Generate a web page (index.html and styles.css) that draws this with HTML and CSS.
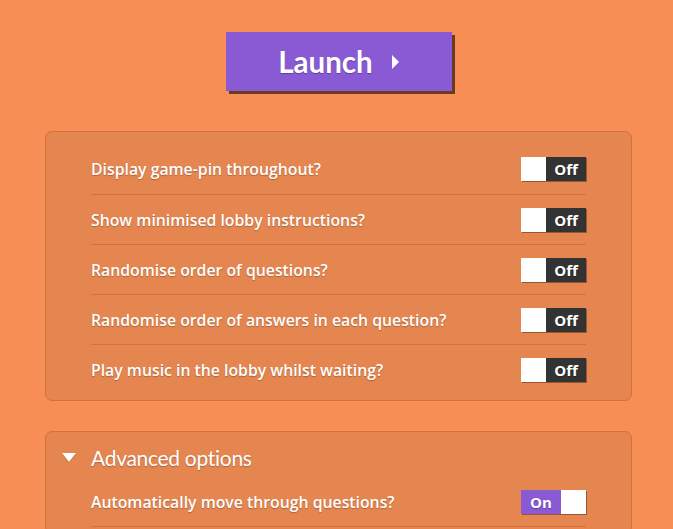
FILE: index.html
```html
<!DOCTYPE html>
<html lang="en">
<head>
<meta charset="UTF-8">
<title>Launch options</title>
<link rel="stylesheet" href="styles.css">
</head>
<body>

<div class="page">
	<div class="launch-wrap">
		<button class="launch">Launch <span class="arrow"></span></button>
	</div>

	<div class="panel">
		<div class="row">
			<span class="label">Display game-pin throughout?</span>
			<span class="toggle off"><span class="knob"></span><span class="state">Off</span></span>
		</div>
		<div class="row">
			<span class="label">Show minimised lobby instructions?</span>
			<span class="toggle off"><span class="knob"></span><span class="state">Off</span></span>
		</div>
		<div class="row">
			<span class="label">Randomise order of questions?</span>
			<span class="toggle off"><span class="knob"></span><span class="state">Off</span></span>
		</div>
		<div class="row">
			<span class="label">Randomise order of answers in each question?</span>
			<span class="toggle off"><span class="knob"></span><span class="state">Off</span></span>
		</div>
		<div class="row">
			<span class="label">Play music in the lobby whilst waiting?</span>
			<span class="toggle off"><span class="knob"></span><span class="state">Off</span></span>
		</div>
	</div>

	<div class="panel advanced">
		<div class="adv-head">
			<span class="caret"></span>
			<span class="adv-title">Advanced options</span>
		</div>
		<div class="row">
			<span class="label">Automatically move through questions?</span>
			<span class="toggle on"><span class="state">On</span><span class="knob"></span></span>
		</div>
	</div>
</div>

</body>
</html>
```

FILE: styles.css
```css
* {
	box-sizing: border-box;
	margin: 0;
	padding: 0;
}
html, body {
	background: #f78e56;
	color: #fff;
	height: 100%;
	overflow: hidden;
}
body {
	font-family: "Open Sans", Lato, sans-serif;
}
.page {
	width: 587px;
	margin-left: 45px;
	padding-top: 32px;
}
.launch-wrap {
	display: flex;
	justify-content: center;
	margin-bottom: 40px;
}
.launch {
	width: 226px;
	height: 59px;
	border: none;
	background: #8a5ad4;
	box-shadow: 3px 3px 0 #6b3a22;
	color: #fff;
	font-family: Lato, sans-serif;
	font-weight: 700;
	font-size: 29.5px;
	text-shadow: 0 1px 1px rgba(0,0,0,0.3);
	display: flex;
	align-items: center;
	justify-content: center;
	gap: 19px;
}
.arrow {
	width: 0;
	height: 0;
	border-top: 7px solid transparent;
	border-bottom: 7px solid transparent;
	border-left: 7px solid #fff;
}
.panel {
	background: #e5854f;
	border: 1px solid #d66f3c;
	border-radius: 7px;
	padding: 12px 45px 6px 45px;
}
.row {
	display: flex;
	align-items: center;
	justify-content: space-between;
	height: 50px;
	border-top: 1px solid #d66f3c;
}
.row:first-child {
	border-top: none;
}
.label {
	font-size: 15.8px;
	font-weight: 600;
	text-shadow: 0 1px 1px rgba(0,0,0,0.25);
}
.toggle {
	display: flex;
	height: 24px;
	font-family: "Open Sans", sans-serif;
	font-weight: 700;
	font-size: 15px;
	box-shadow: 1px 1px 0 rgba(80,40,20,0.5);
}
.knob {
	width: 25px;
	background: #fff;
}
.state {
	width: 40px;
	display: flex;
	align-items: center;
	justify-content: center;
	text-shadow: 0 1px 1px rgba(0,0,0,0.3);
}
.toggle.off .state {
	background: #333;
}
.toggle.on .state {
	background: #8a5ad4;
}
.advanced {
	margin-top: 30px;
	padding-top: 5px;
}
.adv-head {
	display: flex;
	align-items: center;
	height: 40px;
	margin-left: -29px;
}
.caret {
	width: 0;
	height: 0;
	border-left: 7px solid transparent;
	border-right: 7px solid transparent;
	border-top: 9px solid #fff;
	margin-right: 15px;
	filter: drop-shadow(0 1px 0 rgba(0,0,0,0.2));
}
.adv-title {
	font-family: Lato, sans-serif;
	font-size: 21px;
	letter-spacing: -0.3px;
	text-shadow: 0 1px 1px rgba(0,0,0,0.25);
}
.advanced .row:nth-child(2) {
	border-top: none;
	border-bottom: 1px solid #d66f3c;
}
```
